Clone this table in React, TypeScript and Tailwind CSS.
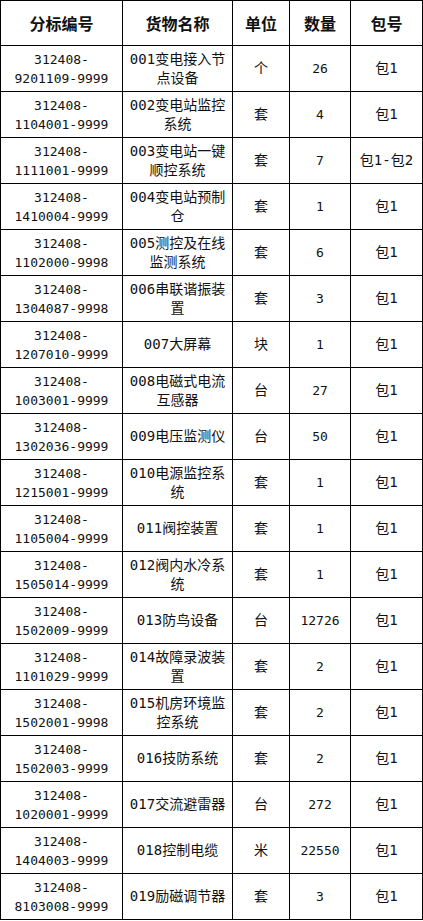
import React from 'react';

interface Row {
  code: [string, string];
  name: string[];
  unit: string;
  qty: string;
  pkg: string;
}

const rows: Row[] = [
  { code: ['312408-', '9201109-9999'], name: ['001变电接入节', '点设备'], unit: '个', qty: '26', pkg: '包1' },
  { code: ['312408-', '1104001-9999'], name: ['002变电站监控', '系统'], unit: '套', qty: '4', pkg: '包1' },
  { code: ['312408-', '1111001-9999'], name: ['003变电站一键', '顺控系统'], unit: '套', qty: '7', pkg: '包1-包2' },
  { code: ['312408-', '1410004-9999'], name: ['004变电站预制', '仓'], unit: '套', qty: '1', pkg: '包1' },
  { code: ['312408-', '1102000-9998'], name: ['005测控及在线', '监测系统'], unit: '套', qty: '6', pkg: '包1' },
  { code: ['312408-', '1304087-9998'], name: ['006串联谐振装', '置'], unit: '套', qty: '3', pkg: '包1' },
  { code: ['312408-', '1207010-9999'], name: ['007大屏幕'], unit: '块', qty: '1', pkg: '包1' },
  { code: ['312408-', '1003001-9999'], name: ['008电磁式电流', '互感器'], unit: '台', qty: '27', pkg: '包1' },
  { code: ['312408-', '1302036-9999'], name: ['009电压监测仪'], unit: '台', qty: '50', pkg: '包1' },
  { code: ['312408-', '1215001-9999'], name: ['010电源监控系', '统'], unit: '套', qty: '1', pkg: '包1' },
  { code: ['312408-', '1105004-9999'], name: ['011阀控装置'], unit: '套', qty: '1', pkg: '包1' },
  { code: ['312408-', '1505014-9999'], name: ['012阀内水冷系', '统'], unit: '套', qty: '1', pkg: '包1' },
  { code: ['312408-', '1502009-9999'], name: ['013防鸟设备'], unit: '台', qty: '12726', pkg: '包1' },
  { code: ['312408-', '1101029-9999'], name: ['014故障录波装', '置'], unit: '套', qty: '2', pkg: '包1' },
  { code: ['312408-', '1502001-9998'], name: ['015机房环境监', '控系统'], unit: '套', qty: '2', pkg: '包1' },
  { code: ['312408-', '1502003-9999'], name: ['016技防系统'], unit: '套', qty: '2', pkg: '包1' },
  { code: ['312408-', '1020001-9999'], name: ['017交流避雷器'], unit: '台', qty: '272', pkg: '包1' },
  { code: ['312408-', '1404003-9999'], name: ['018控制电缆'], unit: '米', qty: '22550', pkg: '包1' },
  { code: ['312408-', '8103008-9999'], name: ['019励磁调节器'], unit: '套', qty: '3', pkg: '包1' },
];

const headers = ['分标编号', '货物名称', '单位', '数量', '包号'];

const App: React.FC = () => {
  return (
    <div className="bg-white w-[423px] h-[921px] text-[#111] font-['DejaVu_Sans_Mono','Noto_Sans_CJK_SC',monospace]">
      <table className="border-collapse table-fixed w-[422px]">
        <colgroup>
          <col className="w-[122px]" />
          <col className="w-[110px]" />
          <col className="w-[57px]" />
          <col className="w-[61px]" />
          <col className="w-[72px]" />
        </colgroup>
        <thead>
          <tr className="h-[45px]">
            {headers.map((h) => (
              <th
                key={h}
                className="border border-black text-center align-middle font-bold text-[16px] font-['Noto_Sans_CJK_SC',sans-serif] p-0"
              >
                {h}
              </th>
            ))}
          </tr>
        </thead>
        <tbody>
          {rows.map((r, i) => (
            <tr key={i} className="h-[46px] text-[14px] leading-[19px]">
              <td className="border border-black text-center align-middle p-0 text-[13px]">
                {r.code[0]}
                <br />
                {r.code[1]}
              </td>
              <td className="border border-black text-center align-middle p-0 whitespace-nowrap">
                {r.name.map((n, j) => (
                  <div key={j}>{n}</div>
                ))}
              </td>
              <td className="border border-black text-center align-middle p-0">{r.unit}</td>
              <td className="border border-black text-center align-middle p-0 text-[13px]">{r.qty}</td>
              <td className="border border-black text-center align-middle p-0">{r.pkg}</td>
            </tr>
          ))}
        </tbody>
      </table>
    </div>
  );
};

export default App;
